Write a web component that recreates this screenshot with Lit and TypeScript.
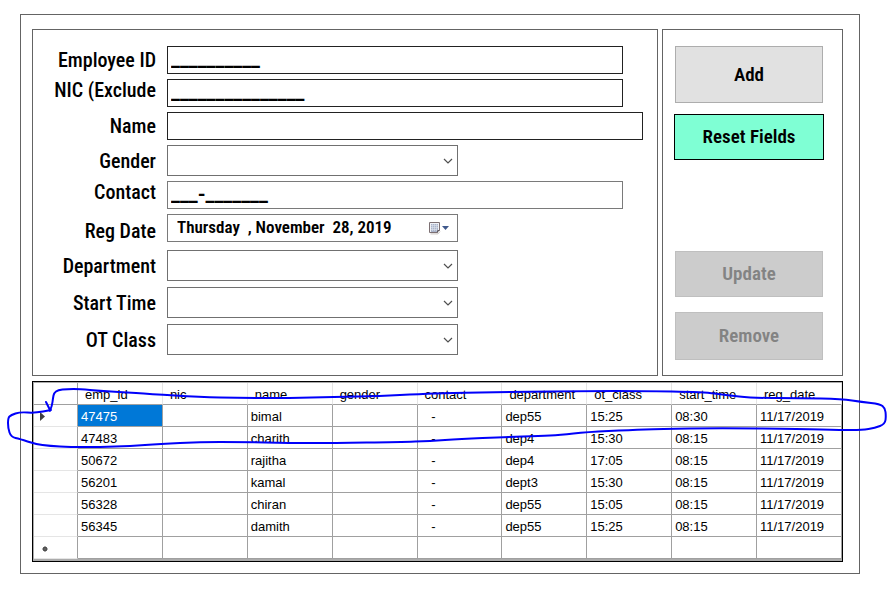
import { LitElement, html, css, svg, nothing } from "lit";
import { customElement, property, state } from "lit/decorators.js";

type Point = [number, number];

interface Employee {
  emp_id: string;
  nic: string;
  name: string;
  gender: string;
  contact: string;
  department: string;
  ot_class: string;
  start_time: string;
  reg_date: string;
}

const COLUMNS: (keyof Employee)[] = [
  "emp_id", "nic", "name", "gender", "contact",
  "department", "ot_class", "start_time", "reg_date",
];

const employee = (
  emp_id: string, name: string, department: string, ot_class: string, start_time: string,
): Employee => ({
  emp_id, nic: "", name, gender: "", contact: "   -",
  department, ot_class, start_time, reg_date: "11/17/2019",
});

const EMPLOYEES: Employee[] = [
  employee("47475", "bimal", "dep55", "15:25", "08:30"),
  employee("47483", "charith", "dep4", "15:30", "08:15"),
  employee("50672", "rajitha", "dep4", "17:05", "08:15"),
  employee("56201", "kamal", "dept3", "15:30", "08:15"),
  employee("56328", "chiran", "dep55", "15:05", "08:15"),
  employee("56345", "damith", "dep55", "15:25", "08:15"),
];

/* Pen stroke that circles the first record, ending in an arrow head. */
const STROKE: Point[] = [
  [50, 411], [52, 406], [53, 398], [54, 393], [58, 390], [67, 389], [80, 389], [100, 391],
  [122, 392], [150, 394], [200, 397], [240, 398], [290, 398], [333, 397], [380, 396],
  [420, 394], [450, 393], [510, 392], [590, 391], [640, 391], [704, 392], [725, 395],
  [753, 398], [800, 398], [842, 399], [862, 402], [880, 404], [885, 408], [886, 416],
  [885, 424], [875, 428], [862, 430], [842, 430], [800, 429], [720, 428], [660, 429],
  [630, 430], [587, 432], [560, 435], [540, 436], [505, 437], [460, 439], [430, 441],
  [400, 442], [333, 443], [290, 443], [240, 442], [200, 442], [160, 444], [130, 446],
  [100, 447], [70, 447], [50, 446], [35, 444], [20, 439], [11, 437], [8, 428], [8, 418],
  [11, 415], [20, 412], [35, 413], [51, 410],
];

const smoothPath = (points: Point[]): string => {
  const parts = [`M${points[0][0]} ${points[0][1]}`];
  for (let i = 1; i < points.length - 1; i++) {
    const [x, y] = points[i];
    const [nx, ny] = points[i + 1];
    parts.push(`Q${x} ${y} ${(x + nx) / 2} ${(y + ny) / 2}`);
  }
  const [ex, ey] = points[points.length - 1];
  parts.push(`L${ex} ${ey}`);
  return parts.join(" ");
};

@customElement("employee-form")
class EmployeeForm extends LitElement {
  static styles = css`
    :host {
      display: flex;
      flex-direction: column;
      gap: 8px;
      box-sizing: border-box;
      padding: 16px 14px 20px 0;
      border: 1px solid #646464;
      font: 500 20px/22px "Roboto Condensed", "Liberation Sans Narrow", sans-serif;
      color: #000;
    }
    .group {
      display: grid;
      grid-template-columns: 123px minmax(0, 1fr);
      column-gap: 11px;
      row-gap: 5px;
      align-items: center;
    }
    .group.spaced { row-gap: 6px; }
    label { text-align: right; white-space: nowrap; }
    .raised { align-self: start; }
    .lowered { align-self: end; }
    input, select {
      display: block;
      box-sizing: border-box;
      width: 100%;
      height: 28px;
      margin: 0;
      padding: 0 3px;
      border: 1px solid #222;
      border-radius: 0;
      background: #fff;
      color: inherit;
      font: inherit;
      outline: none;
    }
    .masked {
      width: calc(100% - 20px);
      padding-bottom: 3px;
      font: bold 20px/22px Roboto, Arial, sans-serif;
    }
    .muted { border-color: #7a7a7a; }
    .combo { position: relative; max-width: 291px; }
    select {
      height: 31px;
      appearance: none;
      border-color: #707070;
    }
    .chevron {
      position: absolute;
      right: 5px;
      top: 11px;
      pointer-events: none;
    }
    .date {
      padding: 0 40px 2px 9px;
      border-color: #7a7a7a;
      font-size: 17px;
      font-weight: 600;
    }
    .picker {
      position: absolute;
      right: 7px;
      top: 7px;
      display: flex;
      padding: 0;
      border: 0;
      background: none;
    }
  `;

  private masked(id: string, label: string, value: string, labelClass = "", inputClass = "") {
    return html`
      <label for=${id} class=${labelClass}>${label}</label>
      <input id=${id} class="masked ${inputClass}" type="text" .value=${value} />
    `;
  }

  private combo(id: string, label: string) {
    return html`
      <label for=${id}>${label}</label>
      <div class="combo">
        <select id=${id}><option></option></select>
        <svg class="chevron" width="10" height="10" viewBox="0 0 10 10" aria-hidden="true">
          <path d="M1 3 L5 7 L9 3" fill="none" stroke="#505050" stroke-width="1.2" />
        </svg>
      </div>
    `;
  }

  render() {
    return html`
      <div class="group">
        ${this.masked("emp", "Employee ID", "_".repeat(10))}
        ${this.masked("nic", "NIC (Exclude", "_".repeat(15), "raised")}
        <label for="name">Name</label>
        <input id="name" type="text" />
        ${this.combo("gender", "Gender")}
        ${this.masked("contact", "Contact", "___-_______", "raised", "muted")}
        <label for="date" class="lowered">Reg Date</label>
        <div class="combo">
          <input id="date" class="date" type="text" .value=${"Thursday  , November  28, 2019"} />
          <button class="picker" type="button" aria-label="Open calendar">
            <svg width="23" height="14" viewBox="0 0 23 14" aria-hidden="true">
              <path d="M2.5 12.900 H10 L12 10.500" fill="none" stroke="#c9c4c2" />
              <path d="M1.5 1.5 H11.5 V9.5 L9.5 11.5 H1.5 Z" fill="#f1f2f7" stroke="#7d7073" />
              <path d="M3 3h7v6h-1v2h-6z" fill="#a9b3c9" />
              <path d="M3 4.5H10M3 6.500H10M3 8.500H9M4.500 3V10M6.500 3V10M8.500 3V10"
                stroke="#dfe4ee" stroke-width="0.600" />
              <path d="M9.500 11.500 V9.500 H11.500" fill="#fff" stroke="#5d5961" />
              <path d="M14 5 H21 L17.500 9 Z" fill="#40598c" />
            </svg>
          </button>
        </div>
      </div>
      <div class="group spaced">
        ${this.combo("dept", "Department")}
        ${this.combo("start", "Start Time")}
        ${this.combo("ot", "OT Class")}
      </div>
    `;
  }
}

@customElement("action-panel")
class ActionPanel extends LitElement {
  static styles = css`
    :host {
      display: flex;
      flex-direction: column;
      box-sizing: border-box;
      padding: 16px 18px 15px 11px;
      border: 1px solid #646464;
    }
    button {
      height: 46px;
      margin: 0 1px;
      padding: 0;
      border: 1px solid #adadad;
      border-radius: 0;
      background: #e1e1e1;
      color: #000;
      font: 600 19px/22px "Roboto Condensed", "Liberation Sans Narrow", sans-serif;
    }
    .add { height: 57px; margin-bottom: 11px; }
    .reset { margin: 0; border-color: #000; background: #7fffd4; }
    button:disabled { border-color: #bfbfbf; background: #ccc; color: #838383; }
    .update { margin-top: auto; margin-bottom: 15px; }
    .remove { height: 48px; }
  `;

  render() {
    return html`
      <button class="add" type="button">Add</button>
      <button class="reset" type="button">Reset Fields</button>
      <button class="update" type="button" disabled>Update</button>
      <button class="remove" type="button" disabled>Remove</button>
    `;
  }
}

@customElement("employee-grid")
class EmployeeGrid extends LitElement {
  @property({ attribute: false }) rows: Employee[] = [];
  @state() private current = 0;

  static styles = css`
    :host {
      display: block;
      position: relative;
      box-sizing: border-box;
      padding: 1px 0 2px 1px;
      border: 1px solid #000;
      background: #ababab;
    }
    table {
      width: 100%;
      table-layout: fixed;
      border-collapse: separate;
      border-spacing: 0;
      background: #fff;
      color: #000;
      font: 13px/15px "Liberation Sans", Arial, sans-serif;
    }
    .marker { width: 44px; }
    th, td {
      box-sizing: border-box;
      height: 22px;
      padding: 2px 0 0 3px;
      border-right: 1px solid #a0a0a0;
      border-bottom: 1px solid #a0a0a0;
      text-align: left;
      font-weight: normal;
      white-space: pre;
      overflow: hidden;
    }
    thead th { padding: 2px 0 0 7px; border-right-color: #e5e5e5; }
    thead .marker { border-right-color: #a0a0a0; }
    tbody th { padding: 0 0 0 6px; border-bottom-color: #e5e5e5; }
    tbody th svg { display: block; }
    .selected { background: #0078d7; color: #fff; }
    .pen {
      position: absolute;
      top: -2px;
      left: -27px;
      width: calc(100% + 72px);
      height: 70px;
      pointer-events: none;
    }
  `;

  private currentIcon() {
    return svg`<svg width="10" height="12" viewBox="0 0 10 12"><path d="M0 2 L5 6.500 L0 11 Z" fill="#404040" /></svg>`;
  }

  private newIcon() {
    return svg`<svg width="10" height="12" viewBox="0 0 10 12">
      <circle cx="5" cy="7" r="2.200" fill="#404040" />
      <path d="M5 4V10M2 7H8M3 5L7 9M7 5L3 9" stroke="#606060" stroke-width="0.900" />
    </svg>`;
  }

  render() {
    return html`
      <table>
        <thead>
          <tr>
            <th class="marker"></th>
            ${COLUMNS.map((name) => html`<th scope="col">${name}</th>`)}
          </tr>
        </thead>
        <tbody>
          ${this.rows.map((row, i) => html`
            <tr @click=${() => (this.current = i)}>
              <th scope="row">${i === this.current ? this.currentIcon() : nothing}</th>
              ${COLUMNS.map((name, c) => html`<td
                class=${i === this.current && c === 0 ? "selected" : ""}>${row[name]}</td>`)}
            </tr>
          `)}
          <tr>
            <th scope="row">${this.newIcon()}</th>
            ${COLUMNS.map(() => html`<td></td>`)}
          </tr>
        </tbody>
      </table>
      <svg class="pen" viewBox="6 380 881 70" preserveAspectRatio="none" aria-hidden="true">
        <g fill="none" stroke="#0000fa" stroke-width="2" stroke-linecap="round" stroke-linejoin="round">
          <path d=${smoothPath(STROKE)} />
          <path d="M46 402 L50 410" />
        </g>
      </svg>
    `;
  }
}

@customElement("app-root")
class AppRoot extends LitElement {
  static styles = css`
    :host {
      display: block;
      padding: 14px 27px 23px 20px;
      background: #fff;
    }
    .frame {
      display: flex;
      flex-direction: column;
      gap: 5px;
      padding: 14px 16px 11px 11px;
      border: 1px solid #646464;
    }
    .top { display: flex; gap: 4px; }
    employee-form { flex: 1; min-width: 0; }
    action-panel { flex: 0 0 181px; }
  `;

  render() {
    return html`
      <main class="frame">
        <div class="top">
          <employee-form></employee-form>
          <action-panel></action-panel>
        </div>
        <employee-grid .rows=${EMPLOYEES}></employee-grid>
      </main>
    `;
  }
}
